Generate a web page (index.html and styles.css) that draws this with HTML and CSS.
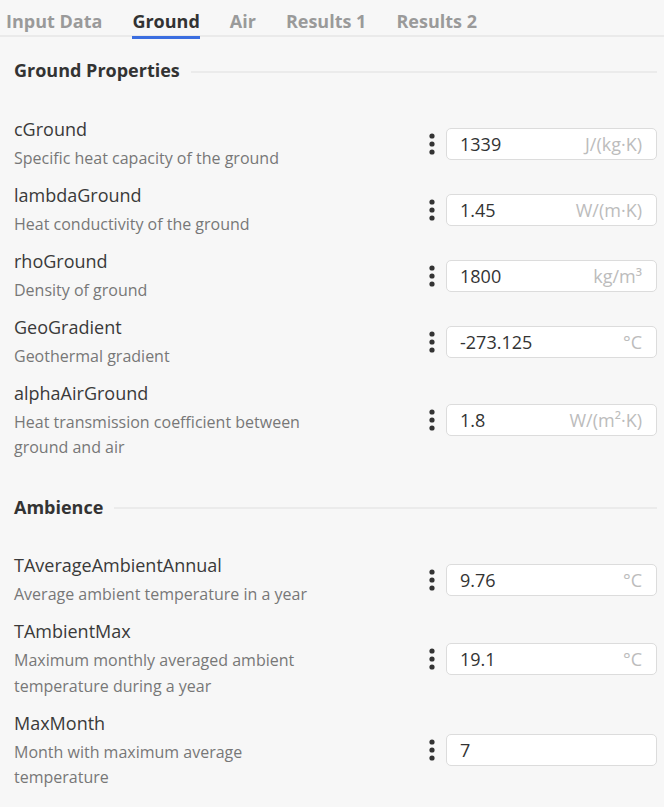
FILE: index.html
```html
<!DOCTYPE html>
<html lang="en">
<head>
<meta charset="utf-8">
<title>Ground</title>
<link rel="stylesheet" href="styles.css">
</head>
<body>
<nav class="tabs">
  <span class="tab">Input Data</span>
  <span class="tab active">Ground</span>
  <span class="tab">Air</span>
  <span class="tab">Results 1</span>
  <span class="tab">Results 2</span>
</nav>

<section class="section first">
  <h2 class="heading">Ground Properties</h2>
  <div class="rows">
    <div class="row">
      <div class="text"><div class="label">cGround</div><div class="desc">Specific heat capacity of the ground</div></div>
      <div class="control">
        <svg class="dots" width="6" height="22" viewBox="0 0 6 22"><circle cx="3" cy="3" r="2.6"/><circle cx="3" cy="11" r="2.6"/><circle cx="3" cy="19" r="2.6"/></svg>
        <div class="field"><span class="value">1339</span><span class="unit">J/(kg·K)</span></div>
      </div>
    </div>
    <div class="row">
      <div class="text"><div class="label">lambdaGround</div><div class="desc">Heat conductivity of the ground</div></div>
      <div class="control">
        <svg class="dots" width="6" height="22" viewBox="0 0 6 22"><circle cx="3" cy="3" r="2.6"/><circle cx="3" cy="11" r="2.6"/><circle cx="3" cy="19" r="2.6"/></svg>
        <div class="field"><span class="value">1.45</span><span class="unit">W/(m·K)</span></div>
      </div>
    </div>
    <div class="row">
      <div class="text"><div class="label">rhoGround</div><div class="desc">Density of ground</div></div>
      <div class="control">
        <svg class="dots" width="6" height="22" viewBox="0 0 6 22"><circle cx="3" cy="3" r="2.6"/><circle cx="3" cy="11" r="2.6"/><circle cx="3" cy="19" r="2.6"/></svg>
        <div class="field"><span class="value">1800</span><span class="unit">kg/m³</span></div>
      </div>
    </div>
    <div class="row">
      <div class="text"><div class="label">GeoGradient</div><div class="desc">Geothermal gradient</div></div>
      <div class="control">
        <svg class="dots" width="6" height="22" viewBox="0 0 6 22"><circle cx="3" cy="3" r="2.6"/><circle cx="3" cy="11" r="2.6"/><circle cx="3" cy="19" r="2.6"/></svg>
        <div class="field"><span class="value">-273.125</span><span class="unit">°C</span></div>
      </div>
    </div>
    <div class="row">
      <div class="text"><div class="label">alphaAirGround</div><div class="desc">Heat transmission coefficient between<br>ground and air</div></div>
      <div class="control">
        <svg class="dots" width="6" height="22" viewBox="0 0 6 22"><circle cx="3" cy="3" r="2.6"/><circle cx="3" cy="11" r="2.6"/><circle cx="3" cy="19" r="2.6"/></svg>
        <div class="field"><span class="value">1.8</span><span class="unit">W/(m²·K)</span></div>
      </div>
    </div>
  </div>
</section>

<section class="section second">
  <h2 class="heading">Ambience</h2>
  <div class="rows">
    <div class="row">
      <div class="text"><div class="label">TAverageAmbientAnnual</div><div class="desc">Average ambient temperature in a year</div></div>
      <div class="control">
        <svg class="dots" width="6" height="22" viewBox="0 0 6 22"><circle cx="3" cy="3" r="2.6"/><circle cx="3" cy="11" r="2.6"/><circle cx="3" cy="19" r="2.6"/></svg>
        <div class="field"><span class="value">9.76</span><span class="unit">°C</span></div>
      </div>
    </div>
    <div class="row">
      <div class="text"><div class="label">TAmbientMax</div><div class="desc">Maximum monthly averaged ambient<br>temperature during a year</div></div>
      <div class="control">
        <svg class="dots" width="6" height="22" viewBox="0 0 6 22"><circle cx="3" cy="3" r="2.6"/><circle cx="3" cy="11" r="2.6"/><circle cx="3" cy="19" r="2.6"/></svg>
        <div class="field"><span class="value">19.1</span><span class="unit">°C</span></div>
      </div>
    </div>
    <div class="row">
      <div class="text"><div class="label">MaxMonth</div><div class="desc">Month with maximum average<br>temperature</div></div>
      <div class="control">
        <svg class="dots" width="6" height="22" viewBox="0 0 6 22"><circle cx="3" cy="3" r="2.6"/><circle cx="3" cy="11" r="2.6"/><circle cx="3" cy="19" r="2.6"/></svg>
        <div class="field"><span class="value">7</span><span class="unit"></span></div>
      </div>
    </div>
  </div>
</section>
</body>
</html>
```
FILE: styles.css
```css
html, body {
  margin: 0;
  padding: 0;
  background: #f7f7f7;
  font-family: "Open Sans", sans-serif;
  color: #333;
}

.tabs {
  display: flex;
  align-items: flex-start;
  gap: 30px;
  height: 35px;
  padding: 0 6px;
  border-bottom: 2px solid #eaeaea;
}

.tab {
  font-size: 18px;
  font-weight: 700;
  line-height: 24px;
  padding-top: 9px;
  padding-bottom: 3px;
  border-bottom: 3px solid transparent;
  color: #9a9a9a;
  white-space: nowrap;
}

.tab.active {
  color: #333;
  border-bottom-color: #3b6ee0;
}

.section {
  padding: 0 7px 0 14px;
}

.section.first {
  padding-top: 21px;
}

.section.second {
  padding-top: 28.5px;
}

.heading {
  display: flex;
  align-items: center;
  gap: 11px;
  margin: 0 0 28.5px 0;
  font-size: 18px;
  font-weight: 700;
  line-height: 24px;
  color: #333;
}

.heading::after {
  content: "";
  flex: 1;
  height: 2px;
  margin-top: 3px;
  background: #ebebeb;
}

.row {
  display: flex;
  align-items: center;
  padding: 5.25px 0;
}

.text {
  flex: 1;
}

.label {
  font-size: 18px;
  line-height: 27px;
  color: #3a3a3a;
}

.desc {
  margin-top: 3px;
  font-size: 16px;
  line-height: 25.5px;
  color: #777;
}

.control {
  display: flex;
  align-items: center;
  gap: 11px;
}

.dots {
  display: block;
  fill: #333;
}

.field {
  box-sizing: border-box;
  width: 211px;
  height: 32px;
  display: flex;
  align-items: center;
  justify-content: space-between;
  padding: 0 14px 0 13px;
  background: #fff;
  border: 1px solid #dcdcdc;
  border-radius: 5px;
}

.value {
  font-size: 18px;
  color: #333;
}

.unit {
  font-size: 18px;
  color: #bcbcbc;
}
```
